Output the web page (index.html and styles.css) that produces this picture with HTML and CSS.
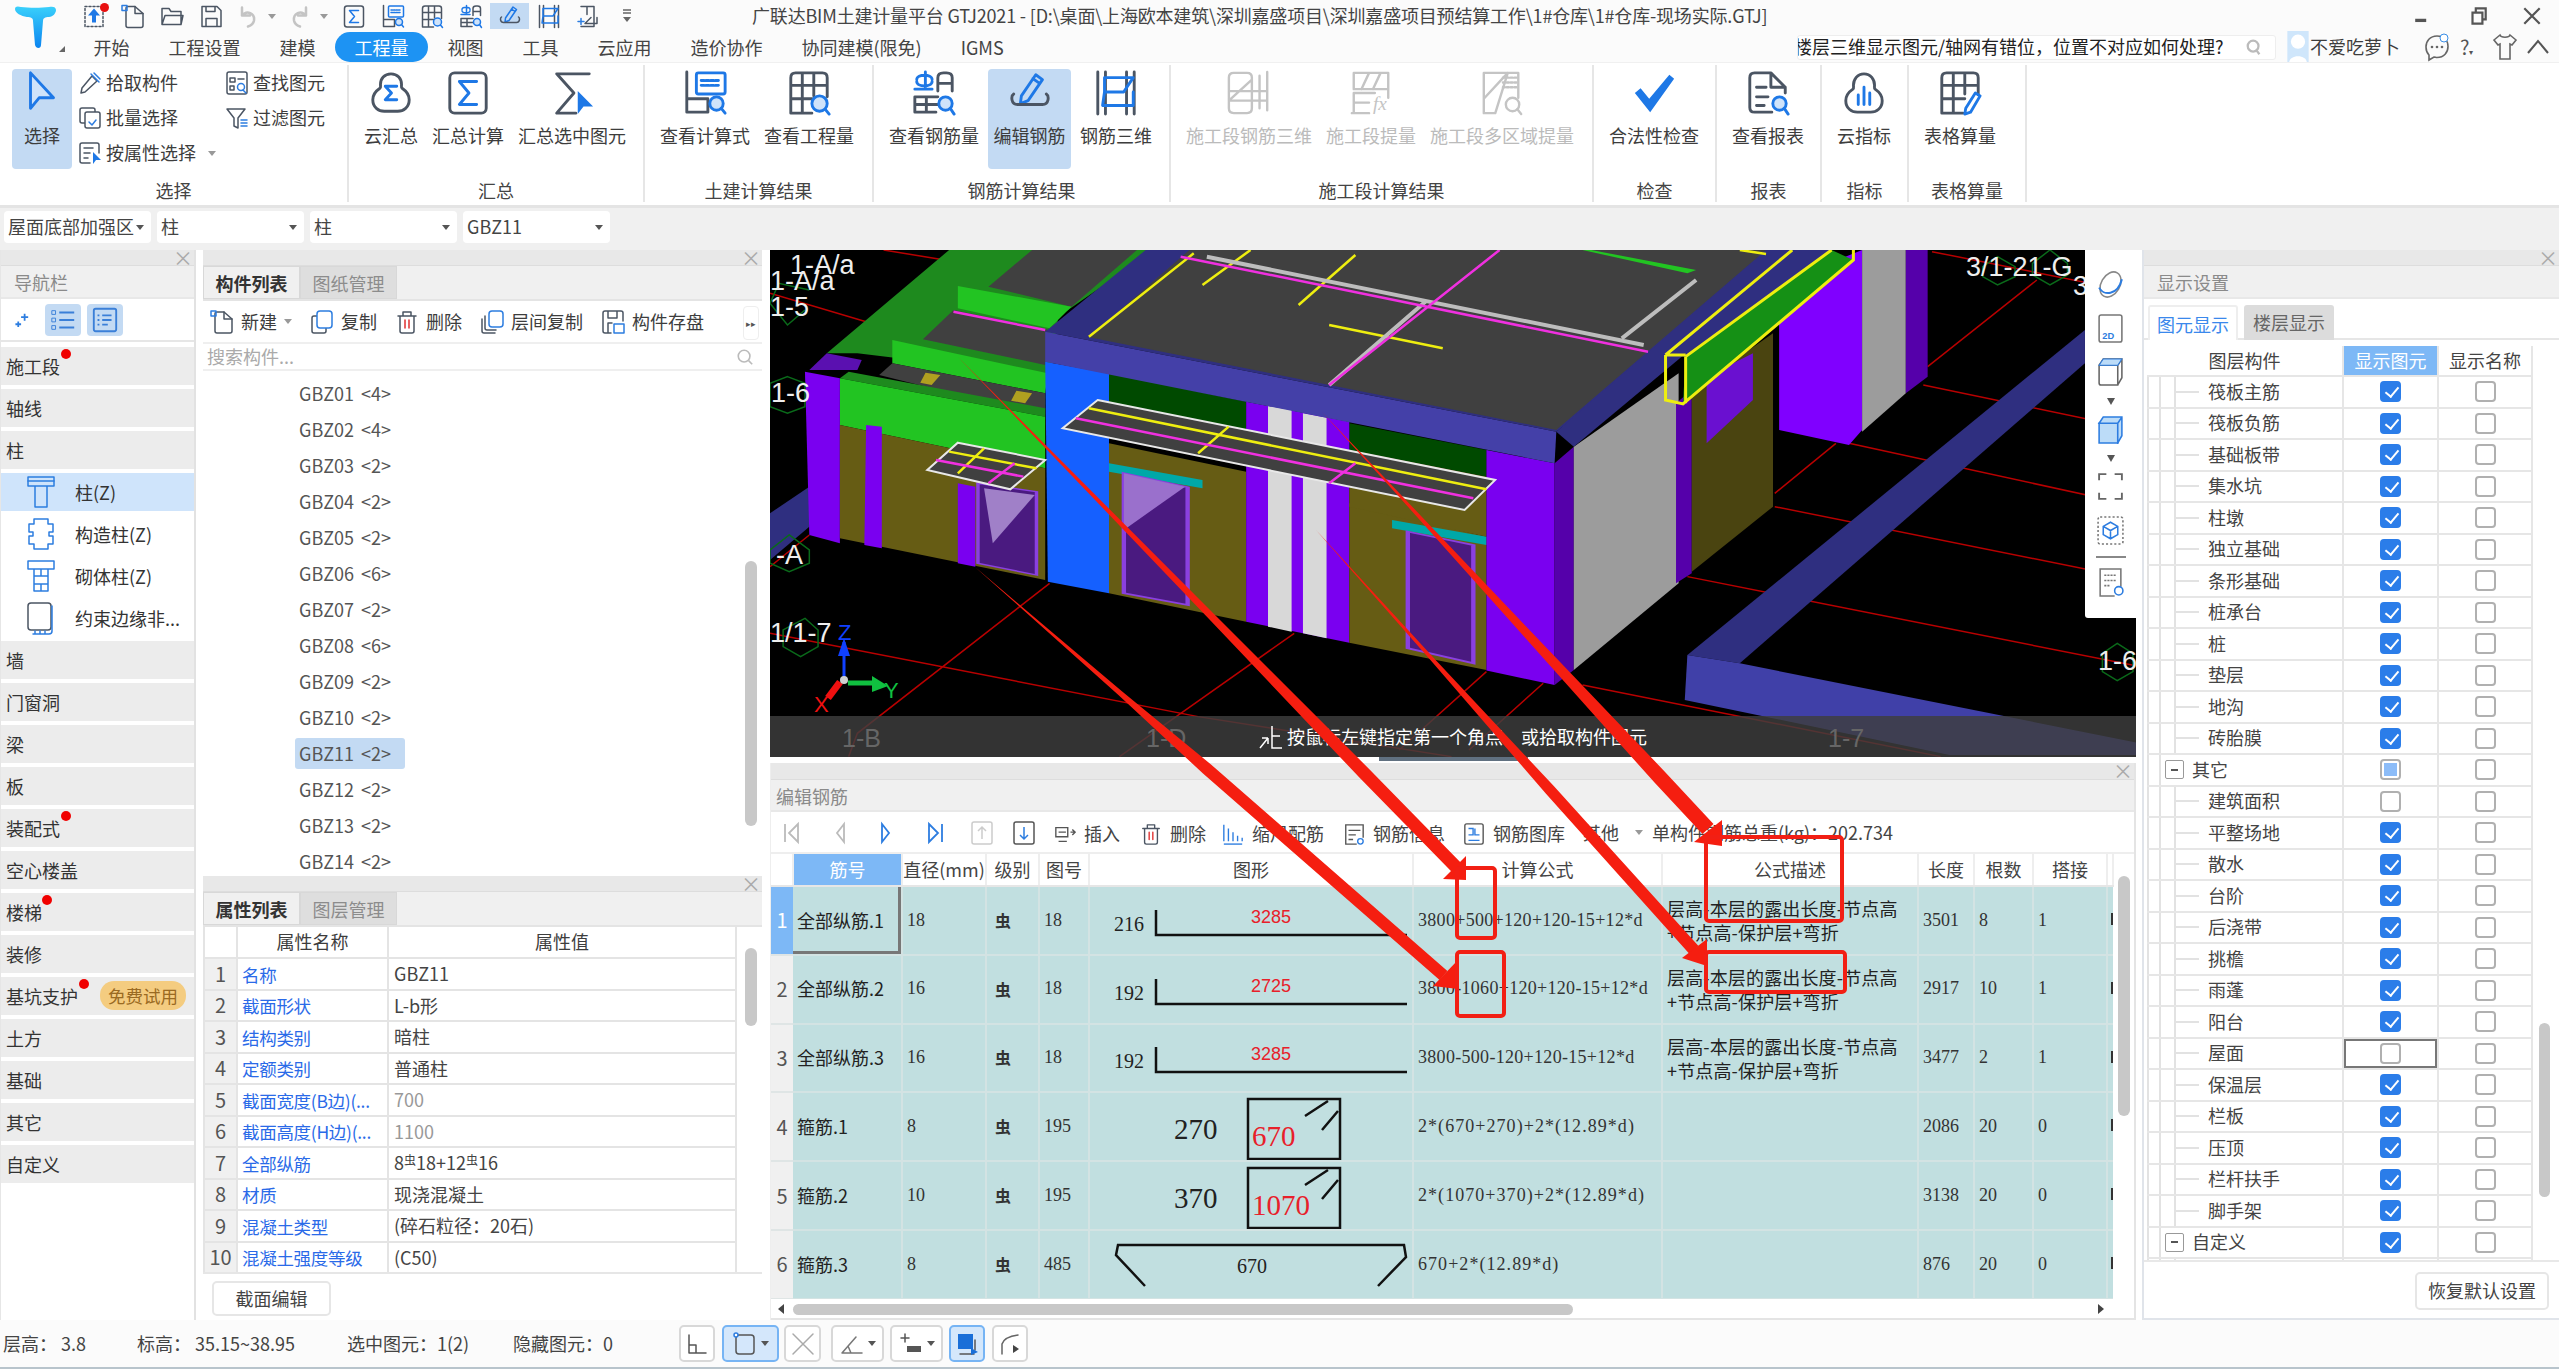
FILE: index.html
```html
<!DOCTYPE html>
<html lang="zh-CN">
<head>
<meta charset="utf-8">
<title>广联达BIM土建计量平台 GTJ2021</title>
<link rel="stylesheet" href="styles.css">
</head>
<body>
<svg class="defs" width="0" height="0">
<defs>
<symbol id="i-cursor" viewBox="0 0 48 48"><path class="bl lf" d="M12 3v37l9-11h15z"/></symbol>
<symbol id="i-cloudsum" viewBox="0 0 48 48"><path class="gr" d="M24 4c-7 0-11 5-11 11 0 2 .6 3-.6 4C8 22 5 26 5 31c0 8 6 12 12 12h14c6 0 12-4 12-12 0-5-3-9-7.400-12-1.200-1-.6-2-.6-4 0-6-4-11-11-11z"/><path class="bl" d="M30 17H18l6.500 7-6.500 7h12"/></symbol>
<symbol id="i-docsum" viewBox="0 0 48 48"><rect class="gr" x="5" y="3" width="38" height="42" rx="5"/><path class="bl" d="M33 12H15l10 12-10 12h18"/></symbol>
<symbol id="i-sumsel" viewBox="0 0 48 48"><path class="gr" d="M42 4H8l18 20L8 45h20"/><path class="bs" d="M30 22v24l6-8h10z"/></symbol>
<symbol id="i-calc" viewBox="0 0 48 48"><path class="gr" d="M5 2v42h22V30H5"/><rect class="bl" x="15" y="3" width="30" height="22" rx="2"/><path class="bl" d="M20 11h20M20 16h20" stroke-dasharray="3 2"/><circle class="bl lf" cx="36" cy="35" r="7"/><path class="bl" d="M41 40l4 5"/></symbol>
<symbol id="i-qty" viewBox="0 0 48 48"><path class="gr" d="M5 45V8q0-5 5-5h28q5 0 5 5v20M5 16h38M5 30h22M17 3v42M29 3v24M5 45h22"/><circle class="bl lf" cx="35" cy="35" r="8"/><path class="bl" d="M41 41l4 5"/></symbol>
<symbol id="i-rebarq" viewBox="0 0 48 48"><path class="bl" d="M15 2v18M6 10c0-6 16-6 16 0M6 12c0 6 16 6 16 0M4 20h18"/><path class="gr" d="M28 22V8q0-5 6-5h3q6 0 6 5v14M28 14h15M4 44V28h24M4 44h22M16 28v16M4 36h24"/><circle class="bl lf" cx="36" cy="35" r="7"/><path class="bl" d="M41 40l4 6"/></symbol>
<symbol id="i-edit" viewBox="0 0 48 48"><path class="bl" d="M30 5l7 5-15 22-8 3 1-8zM27 9l7 5"/><path class="gr" d="M7 25c-3 2-3 11 4 11h26c7 0 7-9 4-11"/></symbol>
<symbol id="i-r3d" viewBox="0 0 48 48"><path class="gr" d="M5 2v44M13 2v44M35 2v44M43 2v44"/><path class="bl" d="M12 8h30l-10 15h-20l-2 14h32V23M12 8v15"/></symbol>
<symbol id="i-d1" viewBox="0 0 48 48"><path class="dg" d="M3 8q0-5 5-5h14q5 0 5 5v32q0 5-5 5H8q-5 0-5-5zM35 6v34M43 2v40M3 22h40M3 32h40M3 32l24-22"/></symbol>
<symbol id="i-d2" viewBox="0 0 48 48"><path class="dg" d="M6 20V3h36v26M6 20h36M14 20L22 3M26 20L34 3M6 45V24h22M6 34h16M4 45h18"/><text class="fx" x="26" y="42">fx</text></symbol>
<symbol id="i-d3" viewBox="0 0 48 48"><path class="dg" d="M5 45V3h36v26M5 3L20 3M5 45h12L30 3M5 30l25-27"/><path class="dg" d="M25 8h14M25 13h14M25 18h14" stroke-dasharray="2 2"/><circle class="dg" cx="35" cy="36" r="7"/><path class="dg" d="M40 41l4 5"/></symbol>
<symbol id="i-check" viewBox="0 0 48 48"><path class="bs" d="M4 24l6-5 9 11L40 5l5 4-25 35z"/></symbol>
<symbol id="i-report" viewBox="0 0 48 48"><path class="gr" d="M28 44H10q-5 0-5-5V8q0-5 5-5h17l15 15v6M27 3v15h15M12 18h10M12 28h12M12 37h8"/><circle class="bl lf" cx="36" cy="35" r="7"/><path class="bl" d="M41 40l4 6"/></symbol>
<symbol id="i-cbar" viewBox="0 0 48 48"><path class="gr" d="M24 4c-7 0-11 6-11 12 0 2 .6 3-.6 4C8 23 5 27 5 32c0 8 6 12 12 12h14c6 0 12-4 12-12 0-5-3-9-7.400-12-1.200-1-.6-2-.6-4 0-6-4-12-11-12z"/><path class="bl" d="M18 36V26M24 36V18M30 36V24"/></symbol>
<symbol id="i-tabedit" viewBox="0 0 48 48"><path class="gr" d="M5 45V8q0-5 5-5h28q5 0 5 5v18M5 16h38M5 30h24M17 3v42M29 3v22M5 45h22"/><path class="bl" d="M40 24l5 3-10 17-6 2 1-6z"/></symbol>
<symbol id="i-pick" viewBox="0 0 24 24"><path class="sg" d="M14 5l5 5L7 21l-4 1 1-5z"/><path class="sb" d="M13 3l8 8M16 2l6 6"/></symbol>
<symbol id="i-batch" viewBox="0 0 24 24"><rect class="sg" x="2" y="2" width="15" height="15" rx="2"/><rect class="sg wf" x="7" y="6" width="15" height="16" rx="2"/><path class="sb" d="M11 16l3 3 4-5"/></symbol>
<symbol id="i-attr" viewBox="0 0 24 24"><path class="sg" d="M12 22H4q-2 0-2-2V4q0-2 2-2h15q2 0 2 2v8M6 7h9M6 12h6M6 17h4"/><path class="bs" d="M15 11v12l3-4h5z"/></symbol>
<symbol id="i-find" viewBox="0 0 24 24"><rect class="sg" x="2" y="1" width="20" height="22" rx="2"/><path class="sg" d="M5 7h5v4H5zM5 15h4v4H5zM13 8h6"/><circle class="sb" cx="16" cy="16" r="3.500"/><path class="sb" d="M18 19l3 3"/></symbol>
<symbol id="i-filter" viewBox="0 0 24 24"><path class="sg" d="M2 3h18l-7 9v10l-4-2v-8z"/><path class="sb" d="M16 14h6M16 17h6M16 20h6"/></symbol>
<symbol id="i-new" viewBox="0 0 24 24"><path class="sg" d="M14 2H7q-2 0-2 2v17q0 2 2 2h13q2 0 2-2V9z"/><path class="sg" d="M14 2v7h8"/><path class="sb" d="M1 1h5v5H1z"/></symbol>
<symbol id="i-copy" viewBox="0 0 24 24"><rect class="sg" x="2" y="6" width="14" height="17" rx="2"/><rect class="sb wf" x="7" y="1" width="15" height="17" rx="3"/></symbol>
<symbol id="i-del" viewBox="0 0 24 24"><path class="sg" d="M3 6h18M8 6V2h8v4M5 6v15q0 2 2 2h10q2 0 2-2V6"/><path class="red" d="M10 10v8M14 10v8"/></symbol>
<symbol id="i-fcopy" viewBox="0 0 24 24"><path class="sg" d="M2 9v12q0 2 2 2h11M5 6v12q0 2 2 2h9"/><rect class="sb wf" x="9" y="1" width="14" height="16" rx="3"/></symbol>
<symbol id="i-save" viewBox="0 0 24 24"><path class="sg" d="M10 23H4q-2 0-2-2V3q0-2 2-2h16q2 0 2 2v8M7 1v7h9V1M7 23V13h4"/><rect class="sb" x="13" y="14" width="10" height="9"/></symbol>
<symbol id="i-col" viewBox="0 0 28 34"><path class="sb" d="M1 2h26v9H1zM8 11v21h12V11"/><path class="sb" d="M1 6h26"/></symbol>
<symbol id="i-gz" viewBox="0 0 28 34"><path class="sb" d="M7 2h14v5h5v8h-4v4h4v8h-5v5H7v-5H2v-8h4v-4H2V7h5z"/></symbol>
<symbol id="i-bz" viewBox="0 0 28 34"><path class="sb" d="M1 2h26v8H1zM7 10v22h14V10M7 17h14M7 25h14M14 10v7M14 25v7"/></symbol>
<symbol id="i-yb" viewBox="0 0 28 34"><rect class="sg" x="1" y="2" width="23" height="27" rx="3"/><path class="sb" d="M25 5v25q0 3-3 3H6M8 33v-3M13 33v-3M18 33v-3"/></symbol>
<symbol id="i-open" viewBox="0 0 24 24"><path class="sg" d="M2 20V4h7l2 3h10v13zM2 20l3-9h18l-2 9"/></symbol>
<symbol id="i-floppy" viewBox="0 0 24 24"><path class="sg" d="M3 2h15l4 4v16H3zM7 22v-8h11v8M7 2v5h9V2"/></symbol>
<symbol id="i-up" viewBox="0 0 24 24"><path class="sg" d="M3 2h18v20H3z" stroke-dasharray="2 2"/><path class="bs" d="M12 4l-6 7h4v7h4v-7h4z"/></symbol>
<symbol id="i-undo" viewBox="0 0 24 24"><path class="dg" d="M6 3v8h8M6 11c5-6 13-2 12 5-.5 3-3 5-6 6"/></symbol>
<symbol id="i-redo" viewBox="0 0 24 24"><path class="dg" d="M18 3v8h-8M18 11c-5-6-13-2-12 5 .5 3 3 5 6 6"/></symbol>
<symbol id="i-last" viewBox="0 0 24 24"><path class="sg" d="M5 2h13v20H5M11 2v8M15 13l-6 6h12v-6"/><path class="sb" d="M2 17h6M5 14v6"/></symbol>
</defs>
</svg>

<header class="top">
  <div class="logo">
    <svg class="logo-t" viewBox="0 0 44 44"><defs><linearGradient id="lg" x1="0" y1="0" x2="0" y2="1"><stop offset="0" stop-color="#3ad0fb"/><stop offset="1" stop-color="#0a84f0"/></linearGradient></defs><path fill="url(#lg)" d="M2 4c0-3 3-3 6-2 8 1 20 1 28 0 4-1 7 0 7 3s-3 7-7 7c-4 0-6 1-6 4l-2 24c0 4-5 4-6 0l-2-24c0-3-2-4-6-4C8 11 2 8 2 4z"/></svg>
    <i class="logo-m"></i>
  </div>
  <div class="top-main">
    <div class="titlebar">
      <span class="qa"><svg class="q"><use href="#i-up"/></svg><i class="qdot"></i></span>
      <span class="qa"><svg class="q"><use href="#i-new"/></svg></span>
      <span class="qa"><svg class="q"><use href="#i-open"/></svg></span>
      <span class="qa"><svg class="q"><use href="#i-floppy"/></svg></span>
      <span class="qa wide"><svg class="q"><use href="#i-undo"/></svg><i class="tri"></i></span>
      <span class="qa wide"><svg class="q"><use href="#i-redo"/></svg><i class="tri"></i></span>
      <span class="qa"><svg class="q"><use href="#i-docsum"/></svg></span>
      <span class="qa"><svg class="q"><use href="#i-calc"/></svg></span>
      <span class="qa"><svg class="q"><use href="#i-qty"/></svg></span>
      <span class="qa"><svg class="q"><use href="#i-rebarq"/></svg></span>
      <span class="qa on"><svg class="q"><use href="#i-edit"/></svg></span>
      <span class="qa"><svg class="q"><use href="#i-r3d"/></svg></span>
      <span class="qa"><svg class="q"><use href="#i-last"/></svg></span>
      <span class="qa more"><svg viewBox="0 0 12 16"><path d="M2 2h8M2 5h8" stroke="#666" stroke-width="1.500"/><path d="M2 9h8l-4 5z" fill="#666"/></svg></span>
      <span class="title">广联达BIM土建计量平台 GTJ2021 - [D:\桌面\上海欧本建筑\深圳嘉盛项目\深圳嘉盛项目预结算工作\1#仓库\1#仓库-现场实际.GTJ]</span>
      <span class="win">
        <svg viewBox="0 0 20 20"><path d="M2 14h10" stroke="#555" stroke-width="3"/></svg>
        <svg viewBox="0 0 20 20"><path d="M5 7h9v10H5zM8 7V3h9v10h-3" fill="none" stroke="#555" stroke-width="2"/></svg>
        <svg viewBox="0 0 20 20"><path d="M3 3l14 14M17 3L3 17" stroke="#555" stroke-width="2"/></svg>
      </span>
    </div>
    <div class="tabbar">
      <span class="tab">开始</span><span class="tab">工程设置</span><span class="tab">建模</span><span class="tab act">工程量</span><span class="tab">视图</span><span class="tab">工具</span><span class="tab">云应用</span><span class="tab">造价协作</span><span class="tab">协同建模(限免)</span><span class="tab">IGMS</span>
      <div class="tab-right">
        <div class="search"><span class="search-t">楼层三维显示图元/轴网有错位，位置不对应如何处理?</span><svg viewBox="0 0 20 20"><circle cx="9" cy="9" r="6" fill="none" stroke="#bbb" stroke-width="2.500"/><path d="M13 14l3 4" stroke="#bbb" stroke-width="2.500"/></svg></div>
        <span class="avatar"><svg viewBox="0 0 24 36"><rect width="24" height="36" fill="#cfe6fb"/><circle cx="12" cy="12" r="8" fill="#fff"/><path d="M2 36c0-10 20-10 20 0z" fill="#fff"/></svg></span>
        <span class="uname">不爱吃萝卜</span>
        <svg class="ti" viewBox="0 0 26 30"><path d="M13 4C6 4 2 9 2 15c0 3 1 6 3 8v5l5-3c1 0 2 .5 3 .5 7 0 11-5 11-11S20 4 13 4z" fill="none" stroke="#666" stroke-width="1.600"/><circle cx="8" cy="15" r="1.300" fill="#666"/><circle cx="13" cy="15" r="1.300" fill="#666"/><circle cx="18" cy="15" r="1.300" fill="#666"/><circle cx="20" cy="6" r="4" fill="#fff" stroke="#3a8ee6"/></svg>
        <span class="help">?<i>▾</i></span>
        <svg class="ti" viewBox="0 0 26 30"><path d="M8 3L2 8l4 5 2-1v15h10V12l2 1 4-5-6-5c-1 3-9 3-10 0z" fill="none" stroke="#666" stroke-width="1.600"/></svg>
        <svg class="ti" viewBox="0 0 26 30"><path d="M3 21L13 9l10 12" fill="none" stroke="#555" stroke-width="2"/></svg>
      </div>
    </div>
  </div>
</header>

<section class="ribbon">
  <div class="group">
    <div class="gbody g-sel">
      <div class="big on sel-btn"><svg><use href="#i-cursor"/></svg><span>选择</span></div>
      <div class="smalls s1">
        <div class="sm"><svg><use href="#i-pick"/></svg>拾取构件</div>
        <div class="sm"><svg><use href="#i-batch"/></svg>批量选择</div>
        <div class="sm"><svg><use href="#i-attr"/></svg>按属性选择<i class="tri"></i></div>
      </div>
      <div class="smalls s2">
        <div class="sm"><svg><use href="#i-find"/></svg>查找图元</div>
        <div class="sm"><svg><use href="#i-filter"/></svg>过滤图元</div>
      </div>
    </div>
    <div class="glabel">选择</div>
  </div>
  <div class="group">
    <div class="gbody">
      <div class="big"><svg><use href="#i-cloudsum"/></svg><span>云汇总</span></div>
      <div class="big"><svg><use href="#i-docsum"/></svg><span>汇总计算</span></div>
      <div class="big"><svg><use href="#i-sumsel"/></svg><span>汇总选中图元</span></div>
    </div>
    <div class="glabel">汇总</div>
  </div>
  <div class="group">
    <div class="gbody">
      <div class="big"><svg><use href="#i-calc"/></svg><span>查看计算式</span></div>
      <div class="big"><svg><use href="#i-qty"/></svg><span>查看工程量</span></div>
    </div>
    <div class="glabel">土建计算结果</div>
  </div>
  <div class="group">
    <div class="gbody">
      <div class="big"><svg><use href="#i-rebarq"/></svg><span>查看钢筋量</span></div>
      <div class="big on edit-btn"><svg><use href="#i-edit"/></svg><span>编辑钢筋</span></div>
      <div class="big"><svg><use href="#i-r3d"/></svg><span>钢筋三维</span></div>
    </div>
    <div class="glabel">钢筋计算结果</div>
  </div>
  <div class="group">
    <div class="gbody">
      <div class="big dis"><svg><use href="#i-d1"/></svg><span>施工段钢筋三维</span></div>
      <div class="big dis"><svg><use href="#i-d2"/></svg><span>施工段提量</span></div>
      <div class="big dis"><svg><use href="#i-d3"/></svg><span>施工段多区域提量</span></div>
    </div>
    <div class="glabel">施工段计算结果</div>
  </div>
  <div class="group">
    <div class="gbody"><div class="big"><svg><use href="#i-check"/></svg><span>合法性检查</span></div></div>
    <div class="glabel">检查</div>
  </div>
  <div class="group">
    <div class="gbody"><div class="big"><svg><use href="#i-report"/></svg><span>查看报表</span></div></div>
    <div class="glabel">报表</div>
  </div>
  <div class="group">
    <div class="gbody"><div class="big"><svg><use href="#i-cbar"/></svg><span>云指标</span></div></div>
    <div class="glabel">指标</div>
  </div>
  <div class="group">
    <div class="gbody"><div class="big"><svg><use href="#i-tabedit"/></svg><span>表格算量</span></div></div>
    <div class="glabel">表格算量</div>
  </div>
</section>

<section class="selects">
  <div class="sel">屋面底部加强区<i class="tri dark"></i></div>
  <div class="sel">柱<i class="tri dark"></i></div>
  <div class="sel">柱<i class="tri dark"></i></div>
  <div class="sel">GBZ11<i class="tri dark"></i></div>
</section>

<main class="main">
  <aside class="nav">
    <div class="strip">×</div>
    <div class="ptitle">导航栏</div>
    <div class="nav-tools">
      <svg class="spark" viewBox="0 0 24 24"><path d="M15 3v10M10 8h10M6 14v8M2 18h8" stroke="#2d7de0" stroke-width="2.500"/></svg>
      <span class="nt on"><svg viewBox="0 0 30 30"><path d="M11 7h16M11 15h16M11 23h16" stroke="#3a7fd8" stroke-width="2"/><path d="M3 5h4v4H3zM3 13h4v4H3zM3 21h4v4H3z" fill="none" stroke="#3a7fd8"/></svg></span>
      <span class="nt on"><svg viewBox="0 0 30 30"><rect x="3" y="3" width="24" height="24" rx="2" fill="none" stroke="#3a7fd8" stroke-width="2"/><path d="M12 10h10M12 15h10M12 20h6M7 10h2M7 15h2M7 20h2" stroke="#3a7fd8" stroke-width="2"/></svg></span>
    </div>
    <div class="nlist">
      <div class="ni dot1">施工段</div>
      <div class="ni">轴线</div>
      <div class="ni">柱</div>
      <div class="ni sub act"><svg><use href="#i-col"/></svg>柱(Z)</div>
      <div class="ni sub"><svg><use href="#i-gz"/></svg>构造柱(Z)</div>
      <div class="ni sub"><svg><use href="#i-bz"/></svg>砌体柱(Z)</div>
      <div class="ni sub"><svg><use href="#i-yb"/></svg>约束边缘非...</div>
      <div class="ni">墙</div>
      <div class="ni">门窗洞</div>
      <div class="ni">梁</div>
      <div class="ni">板</div>
      <div class="ni dot1">装配式</div>
      <div class="ni">空心楼盖</div>
      <div class="ni dot2">楼梯</div>
      <div class="ni">装修</div>
      <div class="ni dot3">基坑支护<span class="free">免费试用</span></div>
      <div class="ni">土方</div>
      <div class="ni">基础</div>
      <div class="ni">其它</div>
      <div class="ni">自定义</div>
    </div>
  </aside>

  <div class="mid">
    <section class="plist">
      <div class="strip">×</div>
      <div class="ptabs"><span class="ptab on">构件列表</span><span class="ptab">图纸管理</span></div>
      <div class="ltools">
        <span class="lt"><svg><use href="#i-new"/></svg>新建<i class="tri"></i></span>
        <span class="lt"><svg><use href="#i-copy"/></svg>复制</span>
        <span class="lt"><svg><use href="#i-del"/></svg>删除</span>
        <span class="lt"><svg><use href="#i-fcopy"/></svg>层间复制</span>
        <span class="lt"><svg><use href="#i-save"/></svg>构件存盘</span>
        <span class="overflow">▸▸</span>
      </div>
      <div class="lsearch">搜索构件...<svg viewBox="0 0 20 20"><circle cx="9" cy="9" r="6.500" fill="none" stroke="#bbb" stroke-width="1.800"/><path d="M14 14l4 4" stroke="#bbb" stroke-width="1.800"/></svg></div>
      <div class="lbody">
        <ul class="items">
          <li><span>GBZ01 &lt;4&gt;</span></li><li><span>GBZ02 &lt;4&gt;</span></li><li><span>GBZ03 &lt;2&gt;</span></li><li><span>GBZ04 &lt;2&gt;</span></li><li><span>GBZ05 &lt;2&gt;</span></li><li><span>GBZ06 &lt;6&gt;</span></li><li><span>GBZ07 &lt;2&gt;</span></li><li><span>GBZ08 &lt;6&gt;</span></li><li><span>GBZ09 &lt;2&gt;</span></li><li><span>GBZ10 &lt;2&gt;</span></li><li><span class="cur">GBZ11 &lt;2&gt;</span></li><li><span>GBZ12 &lt;2&gt;</span></li><li><span>GBZ13 &lt;2&gt;</span></li><li><span>GBZ14 &lt;2&gt;</span></li>
        </ul>
        <div class="vbar list-bar"></div>
      </div>
    </section>
    <section class="pprop">
      <div class="strip">×</div>
      <div class="ptabs"><span class="ptab on">属性列表</span><span class="ptab">图层管理</span></div>
      <div class="pbody">
        <table class="props">
          <thead><tr><th class="c0"></th><th class="c1">属性名称</th><th class="c2">属性值</th></tr></thead>
          <tbody>
            <tr><th>1</th><td class="pn">名称</td><td>GBZ11</td></tr>
            <tr><th>2</th><td class="pn">截面形状</td><td>L-b形</td></tr>
            <tr><th>3</th><td class="pn">结构类别</td><td>暗柱</td></tr>
            <tr><th>4</th><td class="pn">定额类别</td><td>普通柱</td></tr>
            <tr><th>5</th><td class="pn">截面宽度(B边)(...</td><td class="mute">700</td></tr>
            <tr><th>6</th><td class="pn">截面高度(H边)(...</td><td class="mute">1100</td></tr>
            <tr><th>7</th><td class="pn">全部纵筋</td><td>8<sup>虫</sup>18+12<sup>虫</sup>16</td></tr>
            <tr><th>8</th><td class="pn">材质</td><td>现浇混凝土</td></tr>
            <tr><th>9</th><td class="pn">混凝土类型</td><td>(碎石粒径：20石)</td></tr>
            <tr><th>10</th><td class="pn">混凝土强度等级</td><td>(C50)</td></tr>
          </tbody>
        </table>
        <div class="vbar prop-bar"></div>
      </div>
      <div class="pfoot"><button class="btn">截面编辑</button></div>
    </section>
  </div>

  <div class="center">
    <div class="scene">
      <svg class="view" viewBox="0 0 1370 520" xmlns="http://www.w3.org/2000/svg">
        <rect width="1370" height="520" fill="#000"/>
        <g transform="scale(.8737 .3333)">
          <g class="axis">
            <path d="M130 0L200 30M0 130L110 215M1330 5L1568 130M1320 405L1568 540M1235 580L1568 770M1150 770L1568 990M1050 980L1568 1250M930 1305L1340 1520M0 1150L490 1400L780 1520M1450 90L1325 350M1220 580L1150 730M320 1000L100 1450L90 1520M600 1150L400 1520M820 1265L720 1500M885 1300L800 1500M45 855L0 950"/>
          </g>
          <polygon fill="#2f2f80" points="1505,240 1505,340 1110,1240 1050,1215"/>
          <polygon fill="#4040a8" points="1050,1215 1047,1350 1350,1515 1568,1515 1568,1480 1110,1240"/>
          <polygon fill="#2f2f80" points="0,790 45,710 45,830 0,930"/>
          <polygon fill="#8000ff" points="1155,100 1250,0 1250,540 1235,585 1155,540"/>
          <polygon fill="#9c9c9c" points="1250,0 1300,0 1300,430 1250,545"/>
          <polygon fill="#5500aa" points="1300,0 1325,0 1325,380 1300,430"/>
          <polygon fill="#1e8a1e" points="205,0 440,0 330,200 320,380 100,310 65,310"/>
          <polygon fill="#404040" points="300,0 420,0 345,170 250,110"/>
          <polygon fill="#404040" points="210,180 320,240 315,345 175,268"/>
          <polygon fill="#22c422" points="215,108 345,170 320,235 215,175"/>
          <polygon fill="#22c422" points="140,270 318,370 315,430 140,340"/>
          <polygon fill="#404040" points="140,340 315,430 315,500 125,375"/>
          <polygon fill="#b0a020" points="178,368 195,375 185,405 172,398"/>
          <polygon fill="#b0a020" points="282,422 300,430 292,460 276,452"/>
          <polygon fill="#1e8a1e" points="90,365 315,475 315,500 80,385"/>
          <polygon fill="#22c422" points="80,385 315,500 315,655 80,525"/>
          <polygon fill="#7a00f0" points="40,365 80,385 80,880 45,855"/>
          <polygon fill="#5a10b0" points="45,360 65,310 105,330 100,360"/>
          <polygon fill="#665c14" points="80,525 315,655 315,990 80,865"/>
          <polygon fill="#7a00f0" points="110,525 128,530 128,895 108,885"/>
          <polygon fill="#7a00f0" points="215,700 235,710 235,950 215,940"/>
          <polygon fill="#4a1a80" stroke="#8a40e0" stroke-width="4" points="238,700 305,725 305,975 238,940"/>
          <polygon fill="#a080c8" points="245,715 303,735 255,880"/>
          <polygon fill="#1560ff" points="315,335 388,370 388,1030 318,995"/>
          <polygon fill="#665c14" points="388,580 545,665 545,1115 388,1030"/>
          <polygon fill="#00a8a8" points="388,640 495,690 495,715 388,665"/>
          <polygon fill="#4a1a80" stroke="#8a40e0" stroke-width="5" points="405,670 478,712 478,1065 405,1030"/>
          <polygon fill="#9a70cc" points="405,670 475,710 405,840"/>
          <polygon fill="#004a00" points="388,370 545,455 545,540 388,460"/>
          <polygon fill="#004a00" points="663,520 820,600 820,680 663,600"/>
          <polygon fill="#7a00f0" points="545,455 663,515 663,1178 545,1115"/>
          <polygon fill="#d8d8d8" points="570,468 597,480 597,1145 570,1130"/>
          <polygon fill="#d8d8d8" points="610,490 637,503 637,1165 610,1150"/>
          <polygon fill="#665c14" points="663,760 820,860 820,1260 663,1178"/>
          <polygon fill="#665c14" points="663,600 820,680 820,860 663,770"/>
          <polygon fill="#00a8a8" points="712,810 820,860 820,885 712,835"/>
          <polygon fill="#4a1a80" stroke="#8a40e0" stroke-width="5" points="730,845 805,885 805,1240 730,1195"/>
          <polygon fill="#7a00f0" points="820,600 898,640 898,1305 820,1262"/>
          <polygon fill="#5500aa" points="898,640 920,590 920,1260 898,1305"/>
          <polygon fill="#9c9c9c" points="920,590 1040,370 1040,1000 920,1260"/>
          <polygon fill="#5500aa" points="1037,460 1055,420 1055,970 1037,1000"/>
          <polygon fill="#4a4410" points="1055,420 1148,250 1148,770 1055,965"/>
          <polygon fill="#6a10d0" points="1072,380 1125,310 1125,450 1072,580"/>
          <polygon fill="#2f2f80" points="315,245 430,0 1170,0 900,545"/>
          <polygon fill="#2f2f80" points="900,545 1140,0 1190,0 920,590"/>
          <polygon fill="#404040" points="365,262 480,0 1140,0 900,540"/>
          <polygon fill="#4440a8" points="315,245 900,545 898,640 315,335"/>
          <polygon fill="#22c422" points="940,0 1060,60 1050,70 930,0"/>
          <g class="th yl"><path d="M365 260L485 10M550 0L495 105M670 15L605 165M640 225L770 295M1110 0L1140 12"/></g>
          <g class="th gy"><path d="M500 20L1000 285M750 155L640 405M1060 90L975 265"/></g>
          <g class="th mg"><path d="M470 20L1005 305M835 0L640 405M210 185L315 240"/></g>
          <polygon fill="#2f2f80" points="1030,315 1170,0 1215,0 1048,320"/>
          <polygon fill="#159015" points="1048,320 1215,0 1240,30 1045,460"/>
          <path class="th yl beam" d="M1025 315L1170 0M1048 320L1215 0M1025 315H1048M1025 315V450L1045 462L1240 30V0M1048 320V460"/>
          <polygon fill="#404040" stroke="#e8e8e8" stroke-width="2" vector-effect="non-scaling-stroke" points="375,450 830,690 795,780 335,535"/>
          <g class="th yl"><path d="M365 475L820 718M525 530L490 610"/></g>
          <g class="th mg"><path d="M350 505L805 745M670 640L640 700"/></g>
          <polygon fill="#404040" stroke="#e8e8e8" stroke-width="2" vector-effect="non-scaling-stroke" points="215,578 315,630 275,718 180,660"/>
          <g class="th yl"><path d="M205 605L305 655M245 595L215 670"/></g>
          <g class="th mg"><path d="M190 630L290 680M280 640L250 700"/></g>
          <g class="hex"><path d="M45 120L10 100 0 160 20 225 40 180M20 380L40 400V470L20 490 0 470V400zM40 1105L55 1140V1190L35 1220 15 1190V1140zM1542 1180L1560 1210V1265L1542 1292 1525 1265V1210z"/><path d="M1405 20L1425 50V80L1405 105 1388 80V50zM1465 0L1485 40V75L1465 105 1445 75V40zM22 855L45 900V940L22 965 0 940V900z"/></g>
        </g>
        <g class="alabel">
          <text x="20" y="24">1-A/a</text>
          <text x="0" y="40">1-A/a</text>
          <text x="0" y="66">1-5</text>
          <text x="1" y="152">1-6</text>
          <text x="6" y="314">-A</text>
          <text x="0" y="392">1/1-7</text>
          <text x="1196" y="26">3/1-21-G</text>
          <text x="1303" y="45">3</text>
          <text x="1328" y="420">1-6</text>
        </g>
        <g class="gizmo">
          <path d="M74 392V430" stroke="#1040ff" stroke-width="3"/><path d="M74 388l-6 18h12z" fill="#1040ff"/>
          <path d="M78 433h28" stroke="#10c040" stroke-width="5"/><path d="M118 436l-16-10v16z" fill="#10c040"/>
          <path d="M70 432L58 448" stroke="#f01010" stroke-width="7"/>
          <circle cx="74" cy="430" r="4" fill="#d0d0d0"/>
          <text class="gz" x="68" y="390">Z</text><text class="gy2" x="114" y="448">Y</text><text class="gx" x="44" y="462">X</text>
        </g>
      </svg>
      <div class="msg">
        <span class="dim d1">1-B</span><span class="dim d2">1-D</span><span class="dim d3">1-7</span>
        <span class="msg-t"><svg viewBox="0 0 26 26"><path d="M2 24L10 14M10 14H4M10 14V20M14 2V24H24M14 12H22" fill="none" stroke="#fff" stroke-width="1.500"/></svg>按鼠标左键指定第一个角点，或拾取构件图元</span>
      </div>
      <aside class="vt">
        <svg viewBox="0 0 28 28"><ellipse cx="14" cy="14" rx="9" ry="13" transform="rotate(30 14 14)" fill="none" stroke="#888" stroke-width="1.500"/><path d="M3 17c4 8 18 8 22-8" fill="none" stroke="#2d7de0" stroke-width="2"/></svg>
        <svg viewBox="0 0 28 28"><rect x="3" y="1" width="22" height="26" rx="2" fill="none" stroke="#777" stroke-width="1.500"/><text class="t2d" x="6" y="24">2D</text></svg>
        <svg viewBox="0 0 28 28"><path d="M3 8h18v19H5q-2 0-2-2zM3 8l4-6h18v18l-4 7M21 8l4-6" fill="none" stroke="#666" stroke-width="1.500"/><path d="M3 8l4-6h18l-4 6z" fill="#bcdcf8" stroke="#2d7de0"/></svg>
        <i class="vtri"></i>
        <svg viewBox="0 0 28 28"><path d="M3 8h18v19H3z" fill="#bcdcf8" stroke="#2d7de0" stroke-width="1.500"/><path d="M3 8l4-6h18v18l-4 7V8zM21 8l4-6" fill="#bcdcf8" stroke="#2d7de0" stroke-width="1.500"/></svg>
        <i class="vtri"></i>
        <svg viewBox="0 0 28 28"><path d="M3 8V2h7M18 2h7v6M25 20v6h-7M10 26H3v-6" fill="none" stroke="#666" stroke-width="1.800"/></svg>
        <svg viewBox="0 0 28 28"><rect x="2" y="1" width="24" height="26" rx="2" fill="none" stroke="#777" stroke-width="1.500" stroke-dasharray="2 2"/><path d="M14 6l7 4v8l-7 4-7-4v-8zM7 10l7 4 7-4M14 14v8" fill="none" stroke="#2d7de0" stroke-width="1.500"/></svg>
        <i class="vline"></i>
        <svg viewBox="0 0 28 28"><path d="M18 27H4V1h20v17" fill="none" stroke="#777" stroke-width="1.500"/><path d="M8 7h12M8 12h12M8 17h6" stroke="#777" stroke-width="1.500" stroke-dasharray="2 1"/><circle cx="22" cy="22" r="4" fill="none" stroke="#2d7de0" stroke-width="1.500"/></svg>
      </aside>
    </div>
    <div class="split"><i></i></div>
    <section class="rebar">
      <div class="strip">×</div>
      <div class="ptitle">编辑钢筋</div>
      <div class="rtools">
        <svg class="nv n1" viewBox="0 0 16 24"><path d="M1 3v18M14 3L5 12l9 9z" fill="none" stroke="#bbb" stroke-width="1.800"/></svg>
        <svg class="nv n2" viewBox="0 0 10 24"><path d="M9 3L2 12l7 9z" fill="none" stroke="#bbb" stroke-width="1.800"/></svg>
        <svg class="nv n3" viewBox="0 0 10 24"><path d="M1 3l7 9-7 9z" fill="none" stroke="#2d7de0" stroke-width="1.800"/></svg>
        <svg class="nv n4" viewBox="0 0 16 24"><path d="M15 3v18M2 3l9 9-9 9z" fill="none" stroke="#2d7de0" stroke-width="1.800"/></svg>
        <svg class="bx b1" viewBox="0 0 22 24"><rect x="1" y="1" width="20" height="22" rx="2" fill="none" stroke="#ccc" stroke-width="1.500"/><path d="M11 18V6M7 10l4-4 4 4" fill="none" stroke="#ccc" stroke-width="1.500"/></svg>
        <svg class="bx b2" viewBox="0 0 22 24"><rect x="1" y="1" width="20" height="22" rx="2" fill="none" stroke="#555" stroke-width="1.500"/><path d="M11 6v12M7 14l4 4 4-4" fill="none" stroke="#2d7de0" stroke-width="1.500"/></svg>
        <span class="rt t1"><svg viewBox="0 0 24 24"><path d="M2 5h13v10H2zM5 20h9M5 10h8M18 10h5M20 7l3 3-3 3" fill="none" stroke="#555" stroke-width="1.500"/></svg>插入</span>
        <span class="rt t2"><svg><use href="#i-del"/></svg>删除</span>
        <span class="rt t3"><svg viewBox="0 0 24 24"><path d="M2 2v18M7 6v14M12 10v10M17 14v6M22 16v4" stroke="#2d7de0" stroke-width="1.500"/><path d="M2 23h20" stroke="#2d7de0" stroke-width="1.500"/></svg>缩尺配筋</span>
        <span class="rt t4"><svg viewBox="0 0 24 24"><path d="M15 23H3V2h19v14M6 8h13M6 13h8M6 18h5" fill="none" stroke="#555" stroke-width="1.500"/><circle cx="19" cy="20" r="3" fill="none" stroke="#2d7de0" stroke-width="1.500"/></svg>钢筋信息</span>
        <span class="rt t5"><svg viewBox="0 0 24 24"><rect x="2" y="1" width="20" height="22" rx="2" fill="none" stroke="#555" stroke-width="1.500"/><path d="M6 6h5v7H6M13 6v7h5M6 19h12" fill="none" stroke="#2d7de0" stroke-width="1.500"/></svg>钢筋图库</span>
        <span class="rt t6">其他<i class="tri"></i></span>
        <span class="rt t7">单构件钢筋总重(kg)：202.734</span>
      </div>
      <div class="rgrid">
        <table class="bars">
          <colgroup><col class="w0"><col class="w1"><col class="w2"><col class="w3"><col class="w4"><col class="w5"><col class="w6"><col class="w7"><col class="w8"><col class="w9"><col class="w10"><col class="w11"></colgroup>
          <thead><tr><th></th><th class="hl">筋号</th><th>直径(mm)</th><th>级别</th><th>图号</th><th>图形</th><th>计算公式</th><th>公式描述</th><th>长度</th><th>根数</th><th>搭接</th><th></th></tr></thead>
          <tbody>
            <tr class="first"><th>1</th><td class="nm cur">全部纵筋.1</td><td>18</td><td class="gd">虫</td><td>18</td><td class="sh"><svg viewBox="0 0 324 69"><text class="s20" x="24" y="44">216</text><path class="kl" d="M66 23v25h251"/><text class="r18" x="181" y="36">3285</text></svg></td><td class="fm">3800+500+120+120-15+12*d</td><td class="ds">层高-本层的露出长度-节点高<br>+节点高-保护层+弯折</td><td>3501</td><td>8</td><td>1</td><td class="tk"></td></tr>
            <tr><th>2</th><td class="nm">全部纵筋.2</td><td>16</td><td class="gd">虫</td><td>18</td><td class="sh"><svg viewBox="0 0 324 69"><text class="s20" x="24" y="44">192</text><path class="kl" d="M66 23v25h251"/><text class="r18" x="181" y="36">2725</text></svg></td><td class="fm">3800-1060+120+120-15+12*d</td><td class="ds">层高-本层的露出长度-节点高<br>+节点高-保护层+弯折</td><td>2917</td><td>10</td><td>1</td><td class="tk"></td></tr>
            <tr><th>3</th><td class="nm">全部纵筋.3</td><td>16</td><td class="gd">虫</td><td>18</td><td class="sh"><svg viewBox="0 0 324 69"><text class="s20" x="24" y="44">192</text><path class="kl" d="M66 23v25h251"/><text class="r18" x="181" y="36">3285</text></svg></td><td class="fm">3800-500-120+120-15+12*d</td><td class="ds">层高-本层的露出长度-节点高<br>+节点高-保护层+弯折</td><td>3477</td><td>2</td><td>1</td><td class="tk"></td></tr>
            <tr><th>4</th><td class="nm">箍筋.1</td><td>8</td><td class="gd">虫</td><td>195</td><td class="sh"><svg viewBox="0 0 324 69"><text class="s29" x="84" y="46">270</text><rect class="kl" x="158" y="6" width="92" height="60"/><path class="kl" d="M215 23l23-15M232 37l16-19"/><text class="r29" x="162" y="53">670</text></svg></td><td class="fm par-f">2*(670+270)+2*(12.89*d)</td><td class="ds"></td><td>2086</td><td>20</td><td>0</td><td class="tk"></td></tr>
            <tr><th>5</th><td class="nm">箍筋.2</td><td>10</td><td class="gd">虫</td><td>195</td><td class="sh"><svg viewBox="0 0 324 69"><text class="s29" x="84" y="46">370</text><rect class="kl" x="158" y="6" width="92" height="60"/><path class="kl" d="M215 23l23-15M232 37l16-19"/><text class="r29" x="162" y="53">1070</text></svg></td><td class="fm par-f">2*(1070+370)+2*(12.89*d)</td><td class="ds"></td><td>3138</td><td>20</td><td>0</td><td class="tk"></td></tr>
            <tr><th>6</th><td class="nm">箍筋.3</td><td>8</td><td class="gd">虫</td><td>485</td><td class="sh"><svg viewBox="0 0 324 69"><path class="kl" d="M55 55L26 24l2-10h286l2 12-28 29"/><text class="s20" x="147" y="42">670</text></svg></td><td class="fm par-f">670+2*(12.89*d)</td><td class="ds"></td><td>876</td><td>20</td><td>0</td><td class="tk"></td></tr>
          </tbody>
        </table>
        <div class="vbar rebar-bar"></div>
      </div>
      <div class="hbar"><i class="ar-l"></i><b></b><i class="ar-r"></i></div>
    </section>
  </div>

  <aside class="right">
    <div class="strip">×</div>
    <div class="ptitle">显示设置</div>
    <div class="rtabs"><span class="rtab on">图元显示</span><span class="rtab">楼层显示</span></div>
    <div class="rwrap">
      <div class="rtbl">
        <div class="row head"><span>图层构件</span><span class="hl">显示图元</span><span>显示名称</span></div>
        <div class="row"><span class="tree">筏板主筋</span><span><i class="cb on"></i></span><span><i class="cb"></i></span></div>
        <div class="row"><span class="tree">筏板负筋</span><span><i class="cb on"></i></span><span><i class="cb"></i></span></div>
        <div class="row"><span class="tree">基础板带</span><span><i class="cb on"></i></span><span><i class="cb"></i></span></div>
        <div class="row"><span class="tree">集水坑</span><span><i class="cb on"></i></span><span><i class="cb"></i></span></div>
        <div class="row"><span class="tree">柱墩</span><span><i class="cb on"></i></span><span><i class="cb"></i></span></div>
        <div class="row"><span class="tree">独立基础</span><span><i class="cb on"></i></span><span><i class="cb"></i></span></div>
        <div class="row"><span class="tree">条形基础</span><span><i class="cb on"></i></span><span><i class="cb"></i></span></div>
        <div class="row"><span class="tree">桩承台</span><span><i class="cb on"></i></span><span><i class="cb"></i></span></div>
        <div class="row"><span class="tree">桩</span><span><i class="cb on"></i></span><span><i class="cb"></i></span></div>
        <div class="row"><span class="tree">垫层</span><span><i class="cb on"></i></span><span><i class="cb"></i></span></div>
        <div class="row"><span class="tree">地沟</span><span><i class="cb on"></i></span><span><i class="cb"></i></span></div>
        <div class="row"><span class="tree">砖胎膜</span><span><i class="cb on"></i></span><span><i class="cb"></i></span></div>
        <div class="row"><span class="par"><i class="minus"></i>其它</span><span><i class="cb part"></i></span><span><i class="cb"></i></span></div>
        <div class="row"><span class="tree">建筑面积</span><span><i class="cb"></i></span><span><i class="cb"></i></span></div>
        <div class="row"><span class="tree">平整场地</span><span><i class="cb on"></i></span><span><i class="cb"></i></span></div>
        <div class="row"><span class="tree">散水</span><span><i class="cb on"></i></span><span><i class="cb"></i></span></div>
        <div class="row"><span class="tree">台阶</span><span><i class="cb on"></i></span><span><i class="cb"></i></span></div>
        <div class="row"><span class="tree">后浇带</span><span><i class="cb on"></i></span><span><i class="cb"></i></span></div>
        <div class="row"><span class="tree">挑檐</span><span><i class="cb on"></i></span><span><i class="cb"></i></span></div>
        <div class="row"><span class="tree">雨蓬</span><span><i class="cb on"></i></span><span><i class="cb"></i></span></div>
        <div class="row"><span class="tree">阳台</span><span><i class="cb on"></i></span><span><i class="cb"></i></span></div>
        <div class="row"><span class="tree">屋面</span><span class="focus"><i class="cb"></i></span><span><i class="cb"></i></span></div>
        <div class="row"><span class="tree">保温层</span><span><i class="cb on"></i></span><span><i class="cb"></i></span></div>
        <div class="row"><span class="tree">栏板</span><span><i class="cb on"></i></span><span><i class="cb"></i></span></div>
        <div class="row"><span class="tree">压顶</span><span><i class="cb on"></i></span><span><i class="cb"></i></span></div>
        <div class="row"><span class="tree">栏杆扶手</span><span><i class="cb on"></i></span><span><i class="cb"></i></span></div>
        <div class="row"><span class="tree">脚手架</span><span><i class="cb on"></i></span><span><i class="cb"></i></span></div>
        <div class="row"><span class="par"><i class="minus"></i>自定义</span><span><i class="cb on"></i></span><span><i class="cb"></i></span></div>
        <div class="row"><span class="tree"></span><span></span><span></span></div>
      </div>
      <div class="vbar right-bar"></div>
    </div>
    <div class="rfoot"><button class="btn">恢复默认设置</button></div>
  </aside>
</main>

<footer class="status">
  <span class="st s-a">层高：&nbsp;3.8</span>
  <span class="st s-b">标高：&nbsp;35.15~38.95</span>
  <span class="st s-c">选中图元：1(2)</span>
  <span class="st s-d">隐藏图元：0</span>
  <span class="sb b-1"><svg viewBox="0 0 24 24"><path d="M4 3v18h17M4 13h7v8" fill="none" stroke="#555" stroke-width="1.500"/></svg></span>
  <span class="sb on b-2"><svg viewBox="0 0 24 24"><rect x="3" y="3" width="18" height="19" rx="3" fill="none" stroke="#555" stroke-width="1.500"/><circle cx="3" cy="3" r="2" fill="#fff" stroke="#2d7de0"/></svg><i class="tri dark"></i></span>
  <span class="sb b-3"><svg viewBox="0 0 24 24"><path d="M2 2l20 20M22 2L2 22" stroke="#aaa" stroke-width="1.500"/></svg></span>
  <span class="sb b-4"><svg viewBox="0 0 24 24"><path d="M2 21h20M2 21L16 5M8 14l3 7" fill="none" stroke="#777" stroke-width="1.500"/></svg><i class="tri dark"></i></span>
  <span class="sb b-4"><svg viewBox="0 0 24 24"><path d="M2 6h8M6 2v8" stroke="#555" stroke-width="1.500"/><rect x="8" y="14" width="14" height="6" fill="#555"/></svg><i class="tri dark"></i></span>
  <span class="sb on b-5"><svg viewBox="0 0 24 24"><rect x="3" y="2" width="15" height="15" fill="#1a6fd8"/><path d="M5 22h14M20 8v10" stroke="#555" stroke-width="1.500"/><path d="M16 16l7 4-7 3z" fill="#1a6fd8"/></svg></span>
  <span class="sb b-6"><svg viewBox="0 0 24 24"><path d="M4 22V12Q6 5 20 3" fill="none" stroke="#666" stroke-width="1.500"/><path d="M15 13l6 4-6 4z" fill="#444"/></svg></span>
</footer>

<svg class="notes" viewBox="0 0 2559 1369" xmlns="http://www.w3.org/2000/svg">
  <g fill="#f51e10">
    <polygon points="958,357 1214.500,614.600 1368.600,768.500 1460.600,862.500 1451.400,871.500 1359.400,777.500 1209.500,619.400"/>
    <polygon points="1466,856 1466,880 1443,879"/>
    <polygon points="975,567 1121.600,691.100 1211,764.500 1447.400,970.900 1439.600,979.900 1203,773.500 1118.400,694.900"/>
    <polygon points="1458,960 1458,989 1433,986"/>
    <polygon points="1322,412 1403,497 1524,624.300 1665.500,772.400 1713.500,823.900 1702.500,834.100 1654.500,782.600 1518,629.700 1401,499"/>
    <polygon points="1722,820 1722,846 1694,842"/>
    <polygon points="1316,530 1434.500,658.700 1554,786.300 1698.500,946 1689.500,954 1546,793.700 1431.500,661.300"/>
    <polygon points="1707,939 1707,966 1682,958"/>
  </g>
  <g fill="none" stroke="#f21f14" stroke-width="4">
    <rect x="1457" y="868" width="38" height="70" rx="3"/>
    <rect x="1457" y="952" width="47" height="64" rx="3"/>
    <rect x="1706" y="837" width="136" height="84" rx="3"/>
    <rect x="1706" y="952" width="139" height="40" rx="3"/>
  </g>
</svg>
</body>
</html>
```

FILE: styles.css
```css
* { box-sizing: border-box; }
html, body { margin: 0; padding: 0; }
body {
  position: relative;
  width: 2559px;
  height: 1369px;
  overflow: hidden;
  background: #fbfbfb;
  color: #3d3d3d;
  font-family: "Noto Sans CJK SC", "Liberation Sans", sans-serif;
  font-size: 18px;
  line-height: 1.2;
  display: flex;
  flex-direction: column;
}
i { font-style: normal; }
.defs { position: absolute; }

/* icon stroke classes */
.gr, .bl, .sg, .sb, .dg, .red { fill: none; stroke-linecap: round; stroke-linejoin: round; }
.gr { stroke: #4b5563; stroke-width: 3; }
.bl { stroke: #1e78e6; stroke-width: 3; }
.lf { fill: #cfe3fa; }
.bs { fill: #1e78e6; }
.dg { stroke: #c4c4c4; stroke-width: 2.500; }
.fx { fill: #c4c4c4; font-family: "Liberation Serif", serif; font-style: italic; font-size: 20px; }
.sg { stroke: #4b5563; stroke-width: 1.500; }
.sb { stroke: #2d7de0; stroke-width: 1.500; }
.wf { fill: #fff; }
.red { stroke: #e03030; stroke-width: 1.500; }

.tri { display: inline-block; width: 0; height: 0; border-left: 4px solid transparent; border-right: 4px solid transparent; border-top: 5px solid #999; margin-left: 8px; vertical-align: middle; }
.tri.dark { border-top-color: #555; }

/* top */
.top { display: flex; height: 62px; flex: none; }
.logo { width: 74px; position: relative; flex: none; }
.logo-t { position: absolute; left: 13px; top: 5px; width: 44px; height: 44px; }
.logo-m { position: absolute; left: 59px; top: 46px; border-left: 6px solid transparent; border-bottom: 6px solid #666; }
.top-main { flex: 1; display: flex; flex-direction: column; min-width: 0; }
.titlebar { display: flex; align-items: center; height: 32px; }
.qa { width: 39px; height: 26px; display: flex; align-items: center; justify-content: center; position: relative; flex: none; }
.qa.wide { width: 52px; }
.qa.on { background: #c3daf3; }
.qa.more svg { width: 12px; height: 16px; }
.q { width: 24px; height: 25px; }
.qdot { position: absolute; right: 4px; top: 0; width: 9px; height: 9px; border-radius: 50%; background: #e81010; }
.title { flex: none; margin-left: 106px; white-space: nowrap; font-size: 18px; color: #444; letter-spacing: -.18px; }
.win { margin-left: auto; display: flex; gap: 32px; padding-right: 16px; }
.win svg { width: 22px; height: 22px; }
.tabbar { display: flex; align-items: center; height: 30px; }
.tab { padding: 0 19.500px; height: 30px; line-height: 30px; white-space: nowrap; color: #444; border-radius: 15px; }
.tab.act { background: #1d93f3; color: #fff; }
.tab-right { margin-left: auto; display: flex; align-items: center; }
.search { width: 479px; height: 25px; background: #fff; border: 1px solid #eee; border-radius: 3px; display: flex; align-items: center; justify-content: space-between; padding: 0 12px 0 0; color: #222; overflow: hidden; }
.search-t { white-space: nowrap; margin-left: -4px; }
.search svg { width: 18px; height: 18px; flex: none; }
.avatar { margin-left: 10px; width: 24px; height: 32px; }
.avatar svg { width: 24px; height: 32px; display: block; }
.uname { width: 90px; white-space: nowrap; margin-right: 24px; }
.ti { width: 26px; height: 30px; flex: none; }
.help { width: 42px; padding-left: 10px; font-size: 20px; color: #555; }
.help i { font-size: 8px; }
.tab-right .ti:last-child { margin: 0 8px 0 7px; }

/* ribbon */
.ribbon { height: 146px; flex: none; background: #fff; border-top: 1px solid #f0f0f0; border-bottom: 3px solid #e4e4e4; padding-top: 2px; display: grid; grid-template-columns: 349px 296px 229px 297px 423px 123px 105px 87px 118px; }
.group { height: 137px; padding-top: 4px; border-right: 2px solid #e6e6e6; display: flex; flex-direction: column; }
.gbody { height: 100px; flex: none; display: flex; gap: 14px; padding-left: 15px; }
.glabel { text-align: center; margin-top: 9px; line-height: 24px; color: #444; }
.big { height: 100px; display: flex; flex-direction: column; align-items: center; border-radius: 4px; white-space: nowrap; }
.big svg { width: 46px; height: 46px; margin-top: 1px; flex: none; }
.big span { line-height: 38px; }
.big.dis span { color: #bbb; }
.big.on { background: #c3daf3; }
.sel-btn { width: 60px; margin-left: -3px; }
.edit-btn { width: 83px; margin: 0 -5px; }
.g-sel { gap: 6px; }
.smalls { display: flex; flex-direction: column; gap: 11px; padding-top: 2px; white-space: nowrap; }
.sm { height: 24px; display: flex; align-items: center; gap: 4px; }
.sm svg { width: 24px; height: 24px; }
.s2 { margin-left: 3px; }

/* selects */
.selects { height: 42px; flex: none; background: #f0f0f0; display: flex; gap: 6px; padding: 3px 0 0 4px; }
.sel { width: 147px; height: 32px; background: #fff; border-radius: 4px; display: flex; align-items: center; justify-content: space-between; padding: 0 7px 0 4px; color: #444; white-space: nowrap; }
.sel .tri { margin-left: 0; }

/* main */
.main { height: 1070px; flex: none; display: flex; background: #fff; }
.strip { height: 16px; background: #e8e8e8; color: #aaa; text-align: right; font-size: 20px; line-height: 16px; padding-right: 1px; border-bottom: 1px solid #ddd; flex: none; }
.ptitle { height: 33px; line-height: 33px; padding-left: 13px; color: #8a8a8a; background: #f0f0f0; border-bottom: 2px solid #e8e8e8; flex: none; }

/* nav */
.nav { width: 196px; flex: none; border-right: 2px solid #e2e2e2; border-left: 1px solid #e6e6e6; }
.nav-tools { height: 43px; display: flex; align-items: center; padding-left: 13px; gap: 6px; border-bottom: 2px solid #e6e6e6; }
.spark { width: 17px; height: 20px; margin-right: 8px; }
.nt { width: 36px; height: 32px; border-radius: 4px; display: flex; align-items: center; justify-content: center; }
.nt.on { background: #c3daf3; }
.nt svg { width: 28px; height: 28px; }
.nlist { padding-top: 5px; display: flex; flex-direction: column; gap: 4px; }
.ni { height: 38px; line-height: 38px; background: #ececec; padding-left: 5px; position: relative; color: #333; white-space: nowrap; }
.ni.sub { background: #fff; padding-left: 74px; }
.ni.sub.act { background: #cfe4fb; }
.ni.sub svg { position: absolute; left: 26px; top: 2px; width: 28px; height: 34px; }
.dot1::after, .dot2::after, .dot3::after { content: ""; position: absolute; top: 2px; width: 10px; height: 10px; border-radius: 50%; background: #f00000; }
.dot1::after { left: 60px; }
.dot2::after { left: 41px; }
.dot3::after { left: 78px; }
.free { position: absolute; left: 99px; top: 4px; width: 86px; height: 29px; line-height: 29px; text-align: center; border-radius: 14px; background: #f4cc80; color: #9a6a22; font-size: 17.500px; }

/* middle column */
.mid { width: 559px; margin-left: 7px; flex: none; display: flex; flex-direction: column; gap: 6px; }
.plist { height: 620px; display: flex; flex-direction: column; }
.pprop { height: 444px; display: flex; flex-direction: column; }
.ptabs { height: 35px; background: #f0f0f0; display: flex; border-bottom: 2px solid #e4e4e4; flex: none; }
.ptab { width: 97px; text-align: center; line-height: 33px; background: #dedede; color: #8c8c8c; border: 1px solid #d8d8d8; }
.ptab.on { background: #f0f0f0; color: #333; font-weight: 700; }
.ltools { height: 41px; display: flex; align-items: center; padding-left: 7px; position: relative; flex: none; }
.lt { display: flex; align-items: center; gap: 7px; margin-right: 18px; white-space: nowrap; }
.lt svg { width: 24px; height: 24px; flex: none; }
.lt .tri { margin-left: 0; }
.overflow { position: absolute; right: 3px; top: 5px; width: 16px; height: 34px; line-height: 34px; font-size: 9px; text-align: center; background: #fff; border: 1px solid #eee; border-radius: 4px; color: #555; }
.lsearch { height: 29px; background: #fff; border-top: 2px solid #efefef; border-bottom: 2px solid #efefef; display: flex; align-items: center; justify-content: space-between; padding: 0 8px 0 4px; color: #aaa; flex: none; }
.lsearch svg { width: 18px; height: 18px; }
.lbody { flex: 1; display: flex; position: relative; overflow: hidden; }
.items { list-style: none; margin: 0; padding: 4px 0 0 92px; flex: 1; }
.items li { height: 36px; display: flex; align-items: center; color: #555; white-space: pre; word-spacing: 3px; }
.items span { padding: 0 6px 0 4px; height: 31px; line-height: 31px; width: 110px; border-radius: 3px; }
.items .cur { background: #c3daf3; }
.vbar { width: 12px; background: #c8c8c8; border-radius: 6px; flex: none; }
.list-bar { height: 265px; margin: 190px 5px 0 0; }

/* props */
.pbody { height: 347px; display: flex; flex: none; border-bottom: 2px solid #e6e6e6; overflow: hidden; }
.props { border-collapse: collapse; table-layout: fixed; width: 534px; height: 347px; }
.props .c0 { width: 33px; }
.props .c1 { width: 151px; }
.props thead th { font-weight: 400; height: 31px; background: #fff; border: 2px solid #e4e4e4; border-top: 0; }
.props tbody th { font-weight: 400; background: #f0f0f0; border: 2px solid #e4e4e4; font-size: 20px; padding: 0; color: #555; }
.props td { height: 31.400px; border: 2px solid #e4e4e4; padding: 1px 0 0 5px; white-space: nowrap; overflow: hidden; color: #444; }
.props td.pn { color: #2a6ae8; padding-left: 4px; font-size: 17.500px; letter-spacing: -.3px; }
.props td.mute { color: #999; }
.props sup { font-size: 12px; vertical-align: 5px; line-height: 0; }
.prop-bar { height: 78px; margin: 21px 0 0 8px; }
.pfoot { padding: 7px 0 0 9px; }
.btn { font: inherit; color: #444; background: #fff; border: 2px solid #e6e6e6; border-radius: 5px; height: 35px; padding: 0; }
.pfoot .btn { width: 119px; }

/* centre */
.center { width: 1366px; margin-left: 8px; flex: none; display: flex; flex-direction: column; }
.scene { height: 507px; flex: none; position: relative; overflow: hidden; background: #000; }
.view { position: absolute; left: 0; top: 0; width: 1370px; height: 520px; }
.axis { fill: none; stroke: #b80000; stroke-width: 1.500px; }
.axis path { vector-effect: non-scaling-stroke; }
.th path, path.th { vector-effect: non-scaling-stroke; fill: none; stroke-width: 2.500px; }
.yl path, path.yl { stroke: #eeee10; }
path.beam { stroke-width: 3px; }
.gy path { stroke: #bdbdbd; stroke-width: 4px; }
.mg path { stroke: #f030e0; }
.hex path { fill: none; stroke: #0a6a1a; stroke-width: 1.500px; vector-effect: non-scaling-stroke; }
.alabel text { fill: #eee; font-family: "Liberation Sans", sans-serif; font-size: 27px; }
.gz, .gy2, .gx { font-family: "Liberation Sans", sans-serif; font-size: 22px; }
.gz { fill: #1040ff; }
.gy2 { fill: #10c040; }
.gx { fill: #f01010; }
.t2d { font-family: "Liberation Sans", sans-serif; font-size: 9px; font-weight: 700; fill: #2d7de0; }
.msg { position: absolute; left: 0; right: 0; top: 466px; height: 41px; background: rgba(62, 62, 62, .82); display: flex; align-items: center; }
.dim { position: absolute; top: 7px; color: #666; font-family: "Liberation Sans", sans-serif; font-size: 25px; }
.d1 { left: 72px; }
.d2 { left: 376px; }
.d3 { left: 1058px; }
.msg-t { position: absolute; left: 488px; top: 8px; color: #fff; white-space: nowrap; display: flex; align-items: center; gap: 3px; }
.msg-t svg { width: 26px; height: 26px; }
.vt { position: absolute; right: 0; top: 0; width: 51px; height: 368px; background: #fff; border-radius: 0 0 0 3px; display: flex; flex-direction: column; align-items: center; padding-top: 20px; }
.vt svg { width: 29px; height: 29px; flex: none; margin-bottom: 14.500px; }
.vtri { width: 0; height: 0; border-left: 4px solid transparent; border-right: 4px solid transparent; border-top: 7px solid #555; margin: -3px 0 10px; }
.vline { width: 30px; height: 2px; background: #888; margin: -3px 0 10px; }
.split { height: 6px; flex: none; background: #fff; position: relative; }
.split i { position: absolute; left: 609px; top: 0; width: 149px; height: 4px; background: #607080; }

/* rebar */
.rebar { flex: 1; display: flex; flex-direction: column; border-right: 2px solid #e4e4e4; border-left: 1px solid #eee; }
.rebar .ptitle { height: 32px; padding-left: 5px; }
.rebar .strip { height: 17px; }
.rtools { height: 42px; position: relative; background: #fff; border-bottom: 2px solid #eee; flex: none; }
.nv, .bx { position: absolute; top: 9px; height: 24px; }
.n1 { left: 13px; width: 16px; }
.n2 { left: 64px; width: 10px; }
.n3 { left: 110px; width: 10px; }
.n4 { left: 156px; width: 16px; }
.b1 { left: 200px; width: 22px; }
.b2 { left: 242px; width: 22px; }
.rt { position: absolute; top: 10px; display: flex; align-items: center; gap: 8px; white-space: nowrap; color: #444; }
.rt svg { width: 22px; height: 24px; flex: none; }
.t1 { left: 283px; }
.t2 { left: 369px; }
.t3 { left: 451px; }
.t4 { left: 572px; }
.t5 { left: 692px; }
.t6 { left: 812px; }
.t7 { left: 881px; }
.rgrid { flex: none; height: 445px; display: flex; overflow: hidden; }
.bars { width: 1342px; height: 445px; border-collapse: collapse; table-layout: fixed; flex: none; }
.w0 { width: 22px; } .w1 { width: 109px; } .w2 { width: 84px; } .w3 { width: 53px; } .w4 { width: 50px; } .w5 { width: 324px; } .w6 { width: 249px; } .w7 { width: 256px; } .w8 { width: 56px; } .w9 { width: 59px; } .w10 { width: 74px; } .w11 { width: 6px; }
.bars thead th { height: 32px; padding: 0; font-weight: 400; background: #fff; border-right: 2px solid #eee; border-bottom: 2px solid #e6e6e6; white-space: nowrap; overflow: hidden; color: #444; }
.bars thead th.hl { background: #7db8f6; color: #fff; }
.bars tbody tr { height: 68.800px; }
.bars tbody th { padding: 0; font-weight: 400; background: #f0f0f0; font-size: 20px; color: #555; border-bottom: 2px solid #dfe5e5; }
.bars tr.first th { background: #7db8f6; color: #fff; }
.bars td { padding: 0 0 0 4px; background: #c1dfe0; border-right: 2px solid #d3e3e3; border-bottom: 2px solid #d3e3e3; color: #333; font-family: "Liberation Serif", "Noto Sans CJK SC", serif; white-space: nowrap; overflow: hidden; vertical-align: middle; }
.bars td.nm { font-family: "Noto Sans CJK SC", sans-serif; color: #222; padding-left: 4px; }
.bars td.nm.cur { box-shadow: inset -3px -3px 0 #777; }
.bars td.gd { font-family: "Noto Sans CJK SC", sans-serif; font-size: 16px; font-weight: 700; padding-left: 8px; }
.bars td.sh { padding: 0; height: 60px; }
.bars td.sh svg { width: 324px; height: 69px; display: block; margin: -2px 0 -4px; }
.bars td.fm { padding-left: 4px; letter-spacing: .3px; }
.bars td.par-f { letter-spacing: 1.050px; }
.bars td.ds { font-family: "Noto Sans CJK SC", sans-serif; line-height: 24px; color: #222; padding-left: 4px; font-size: 18px; letter-spacing: .15px; }
.bars td.tk { padding: 0; background: #c1dfe0; border-right: 0; position: relative; }
.bars td.tk::after { content: ""; position: absolute; right: 0; top: 26px; width: 2px; height: 12px; background: #333; }
.s20 { font-family: "Liberation Serif", serif; font-size: 20px; fill: #222; }
.s29 { font-family: "Liberation Serif", serif; font-size: 29px; fill: #222; }
.r18 { font-family: "Liberation Sans", sans-serif; font-size: 18px; fill: #e8202a; text-anchor: middle; }
.r29 { font-family: "Liberation Serif", serif; font-size: 29px; fill: #e8202a; }
.kl { fill: none; stroke: #111; stroke-width: 2.500px; }
.rebar-bar { height: 240px; margin: 22px 0 0 4px; }
.hbar { flex: 1; background: #fff; position: relative; border-bottom: 2px solid #e4e4e4; }
.hbar b { position: absolute; left: 22px; top: 5px; width: 780px; height: 11px; border-radius: 6px; background: #c8c8c8; }
.ar-l { position: absolute; left: 7px; top: 5px; border-top: 5px solid transparent; border-bottom: 5px solid transparent; border-right: 6px solid #444; }
.ar-r { position: absolute; left: 1327px; top: 5px; border-top: 5px solid transparent; border-bottom: 5px solid transparent; border-left: 6px solid #444; }

/* right */
.right { width: 417px; margin-left: 6px; flex: none; display: flex; flex-direction: column; border-left: 2px solid #e0e4ea; border-bottom: 2px solid #e0e4ea; }
.rtabs { height: 41px; display: flex; gap: 6px; padding: 6px 0 0 4px; border-bottom: 2px solid #e6e6e6; flex: none; }
.rtab { width: 90px; height: 35px; line-height: 34px; text-align: center; background: #dcdcdc; color: #666; border-radius: 3px 3px 0 0; }
.rtab.on { background: #fff; color: #3a88ec; border: 2px solid #eee; border-bottom: 0; }
.rwrap { height: 916px; margin-top: 6px; display: flex; flex: none; padding-left: 3px; overflow: hidden; border-bottom: 2px solid #e8e8e8; }
.rtbl { width: 386px; flex: none; }
.row { display: grid; grid-template-columns: 197px 95px 94px; height: 31.500px; border-bottom: 2px solid #e6e6e6; color: #444; }
.row > span { display: flex; align-items: center; justify-content: center; border-right: 2px solid #e6e6e6; white-space: nowrap; }
.row.head { height: 31px; }
.row.head .hl { background: #7db8f6; color: #fff; }
.row .tree { justify-content: flex-start; padding-left: 61px; background-image: linear-gradient(#e2e2e2, #e2e2e2), linear-gradient(#e2e2e2, #e2e2e2), linear-gradient(#e2e2e2, #e2e2e2), linear-gradient(#e2e2e2, #e2e2e2); background-repeat: no-repeat; background-size: 2px 100%, 2px 100%, 2px 100%, 24px 2px; background-position: 0 0, 12px 0, 27px 0, 28px 50%; }
.row .par { justify-content: flex-start; padding-left: 18px; gap: 8px; background-image: linear-gradient(#e2e2e2, #e2e2e2), linear-gradient(#e2e2e2, #e2e2e2); background-repeat: no-repeat; background-size: 2px 100%, 2px 100%; background-position: 0 0, 12px 0; }
.minus { width: 19px; height: 19px; background: #fff; border: 1.500px solid #999; border-radius: 2px; display: flex; align-items: center; justify-content: center; }
.minus::after { content: ""; width: 7px; height: 2px; background: #555; }
.cb { width: 21px; height: 21px; border: 2px solid #b0b0b0; border-radius: 4px; background: #fff; display: block; position: relative; }
.cb.on { background: #2b7de9; border-color: #2b7de9; }
.cb.on::after { content: ""; position: absolute; left: 5.500px; top: 1px; width: 6px; height: 11px; border: solid #fff; border-width: 0 2.500px 2.500px 0; transform: rotate(40deg); }
.cb.part::after { content: ""; position: absolute; inset: 2px; background: #8cbcf8; }
.row > .focus { box-shadow: inset 0 0 0 2px #777; }
.right-bar { height: 174px; width: 11px; margin: 677px 0 0 6px; }
.rfoot { display: flex; justify-content: flex-end; padding: 10px 10px 0 0; }
.rfoot .btn { width: 134px; height: 38px; }

/* status */
.status { flex: 1; display: flex; align-items: center; background: #fbfbfb; border-bottom: 2px solid #b8c4cc; padding-left: 3px; }
.st { white-space: nowrap; flex: none; color: #444; }
.s-a { width: 134px; }
.s-b { width: 210px; }
.s-c { width: 166px; }
.s-d { width: 166px; }
.status .sb { height: 37px; width: 36px; margin-right: 7px; border: 2px solid #d8d8d8; border-radius: 5px; background: #fff; display: flex; align-items: center; justify-content: center; flex: none; fill: initial; stroke: none; }
.status .sb svg { width: 24px; height: 24px; }
.status .sb .tri { margin-left: 4px; }
.status .sb.on { border-color: #76b4f4; background: #d4e7fb; }
.b-2 { width: 57px !important; margin-right: 5px !important; }
.b-3 { width: 37px !important; margin-right: 10px !important; }
.b-4 { width: 53px !important; margin-right: 6px !important; }

/* annotation overlay */
.notes { position: absolute; left: 0; top: 0; width: 2559px; height: 1369px; pointer-events: none; }
```
